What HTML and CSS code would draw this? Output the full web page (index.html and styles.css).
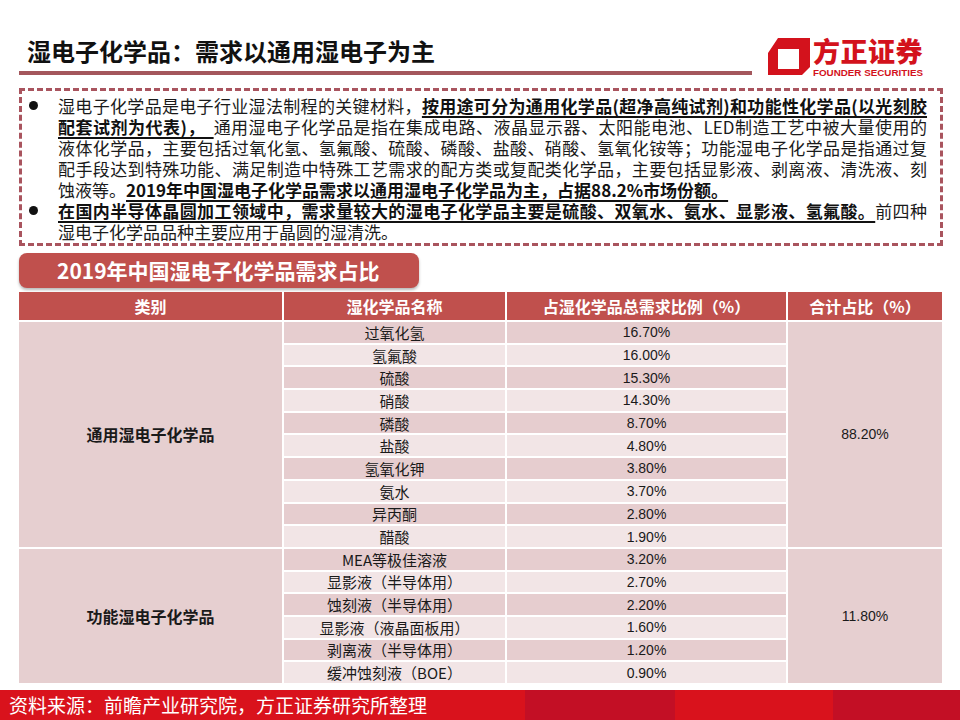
FILE: index.html
```html
<!DOCTYPE html>
<html lang="zh-CN">
<head>
<meta charset="utf-8">
<title>湿电子化学品：需求以通用湿电子为主</title>
<link rel="stylesheet" href="styles.css">
</head>
<body>
<div class="slide">
  <div class="main">
    <header class="top">
      <div class="heading">
        <h1 class="title">湿电子化学品：需求以通用湿电子为主</h1>
        <div class="rule"></div>
      </div>
      <div class="logo">
        <svg class="logo-mark" viewBox="0 0 46 42" width="46" height="42" aria-hidden="true">
          <path fill-rule="evenodd" fill="#d3121c" d="M12 4H44V33L36 41H2V19Z M12 15V35H33V15Z"/>
        </svg>
        <div class="logo-text">
          <div class="logo-cn">方正证券</div>
          <div class="logo-en">FOUNDER SECURITIES</div>
        </div>
      </div>
    </header>

    <section class="notes">
      <div class="item">
        <span class="dot"></span>
        <div class="lines">
          <span class="line full">湿电子化学品是电子行业湿法制程的关键材料，<b class="key">按用途可分为通用化学品(超净高纯试剂)和功能性化学品(以光刻胶</b></span>
          <span class="line full"><b class="key">配套试剂为代表)，&nbsp;&nbsp;</b>通用湿电子化学品是指在集成电路、液晶显示器、太阳能电池、LED制造工艺中被大量使用的</span>
          <span class="line full">液体化学品，主要包括过氧化氢、氢氟酸、硫酸、磷酸、盐酸、硝酸、氢氧化铵等；功能湿电子化学品是指通过复</span>
          <span class="line full">配手段达到特殊功能、满足制造中特殊工艺需求的配方类或复配类化学品，主要包括显影液、剥离液、清洗液、刻</span>
          <span class="line">蚀液等。<b class="key">2019年中国湿电子化学品需求以通用湿电子化学品为主，占据88.2%市场份额。</b></span>
        </div>
      </div>
      <div class="item">
        <span class="dot"></span>
        <div class="lines">
          <span class="line full"><b class="key">在国内半导体晶圆加工领域中，需求量较大的湿电子化学品主要是硫酸、双氧水、氨水、显影液、氢氟酸。</b>前四种</span>
          <span class="line">湿电子化学品品种主要应用于晶圆的湿清洗。</span>
        </div>
      </div>
    </section>

    <div class="tab">2019年中国湿电子化学品需求占比</div>

    <div class="grid">
      <div class="th">类别</div>
      <div class="th">湿化学品名称</div>
      <div class="th">占湿化学品总需求比例（%）</div>
      <div class="th">合计占比（%）</div>

      <div class="cat cat-a">通用湿电子化学品</div>
      <div class="total total-a">88.20%</div>
      <div class="name dark">过氧化氢</div><div class="val dark">16.70%</div>
      <div class="name light">氢氟酸</div><div class="val light">16.00%</div>
      <div class="name dark">硫酸</div><div class="val dark">15.30%</div>
      <div class="name light">硝酸</div><div class="val light">14.30%</div>
      <div class="name dark">磷酸</div><div class="val dark">8.70%</div>
      <div class="name light">盐酸</div><div class="val light">4.80%</div>
      <div class="name dark">氢氧化钾</div><div class="val dark">3.80%</div>
      <div class="name light">氨水</div><div class="val light">3.70%</div>
      <div class="name dark">异丙酮</div><div class="val dark">2.80%</div>
      <div class="name light">醋酸</div><div class="val light">1.90%</div>

      <div class="cat cat-b">功能湿电子化学品</div>
      <div class="total total-b">11.80%</div>
      <div class="name dark">MEA等极佳溶液</div><div class="val dark">3.20%</div>
      <div class="name light">显影液（半导体用）</div><div class="val light">2.70%</div>
      <div class="name dark">蚀刻液（半导体用）</div><div class="val dark">2.20%</div>
      <div class="name light">显影液（液晶面板用）</div><div class="val light">1.60%</div>
      <div class="name dark">剥离液（半导体用）</div><div class="val dark">1.20%</div>
      <div class="name light">缓冲蚀刻液（BOE）</div><div class="val light">0.90%</div>
    </div>
  </div>

  <footer class="source">资料来源：前瞻产业研究院，方正证券研究所整理</footer>
</div>
</body>
</html>
```
FILE: styles.css
```css
* { box-sizing: border-box; }

html, body {
  margin: 0;
  padding: 0;
  background: #ffffff;
}

.slide {
  width: 960px;
  height: 720px;
  overflow: hidden;
  display: flex;
  flex-direction: column;
  font-family: "Noto Sans CJK SC", "Liberation Sans", sans-serif;
  color: #111111;
}

.main {
  padding: 0 18px 0 19px;
}

/* ---------- header ---------- */
.top {
  display: flex;
  align-items: flex-start;
  height: 75px;
  padding-top: 36px;
}

.heading {
  width: 733px;
}

.title {
  margin: 0;
  padding-left: 8px;
  font-size: 24px;
  line-height: 30px;
  font-weight: 700;
  color: #111111;
}

.rule {
  margin-top: 5px;
  height: 4px;
  background: #a4575c;
}

.logo {
  display: flex;
  align-items: flex-start;
  margin-left: 14px;
  margin-top: -2px;
}

.logo-mark {
  display: block;
  flex: none;
}

.logo-text {
  margin-left: 1px;
  margin-top: 4px;
  color: #d3121c;
}

.logo-cn {
  font-size: 27px;
  line-height: 26px;
  font-weight: 900;
  letter-spacing: 0.5px;
}

.logo-en {
  margin-top: 4px;
  font-family: "Liberation Sans", sans-serif;
  font-size: 9.8px;
  line-height: 10px;
  font-weight: 700;
}

/* ---------- notes box ---------- */
.notes {
  margin-top: 13px;
  width: 924px;
  border: 3px dashed #a9545e;
  padding: 4px 13px 1px 7px;
  font-size: 17px;
  line-height: 21px;
  color: #1a1a1a;
}

.item {
  display: grid;
  grid-template-columns: 29px 1fr;
}

.dot {
  width: 9px;
  height: 9px;
  margin-top: 6px;
  border-radius: 50%;
  background: #111111;
}

.line {
  display: block;
  height: 21px;
}

.line.full {
  text-align: justify;
  text-align-last: justify;
}

.key {
  font-weight: 700;
  text-decoration: underline;
  text-underline-offset: 3px;
  text-decoration-thickness: 1.5px;
  color: #111111;
}

/* ---------- section tab ---------- */
.tab {
  margin-top: 7px;
  width: 400px;
  height: 35px;
  border-radius: 8px;
  background: #c0504d;
  box-shadow: 0 2px 3px rgba(0, 0, 0, 0.28);
  padding-left: 38px;
  font-size: 21px;
  line-height: 35px;
  font-weight: 700;
  color: #ffffff;
}

/* ---------- table ---------- */
.grid {
  margin-top: 4px;
  display: grid;
  grid-template-columns: 263px 221px 279px 154px;
  grid-template-rows: 28px repeat(16, 20.7px);
  gap: 2px;
  background: #ffffff;
}

.th {
  background: #c0504d;
  color: #ffffff;
  font-size: 16px;
  font-weight: 700;
  display: flex;
  align-items: center;
  justify-content: center;
}

.cat,
.total {
  background: #e6cfd0;
  display: flex;
  align-items: center;
  justify-content: center;
  color: #1a1a1a;
}

.cat {
  grid-column: 1;
  font-size: 16px;
  font-weight: 700;
}

.total {
  grid-column: 4;
  font-family: "Liberation Sans", sans-serif;
  font-size: 14px;
}

.cat-a, .total-a { grid-row: 2 / span 10; }
.cat-b, .total-b { grid-row: 12 / span 6; }

.name,
.val {
  display: flex;
  align-items: center;
  justify-content: center;
  color: #1a1a1a;
}

.name {
  grid-column: 2;
  font-size: 15px;
}

.val {
  grid-column: 3;
  font-family: "Liberation Sans", sans-serif;
  font-size: 14px;
}

.dark { background: #e6cdcf; }
.light { background: #f2e5e6; }

/* ---------- footer ---------- */
.source {
  margin-top: auto;
  flex: none;
  height: 30px;
  padding-left: 9px;
  font-size: 19px;
  line-height: 30px;
  color: #ffffff;
  background: linear-gradient(90deg,
    #d9121c 0, #d9121c 525px,
    #c30f25 525px, #c30f25 675px,
    #d9121c 675px, #d9121c 833px,
    #c30f25 833px, #c30f25 960px);
}
```
